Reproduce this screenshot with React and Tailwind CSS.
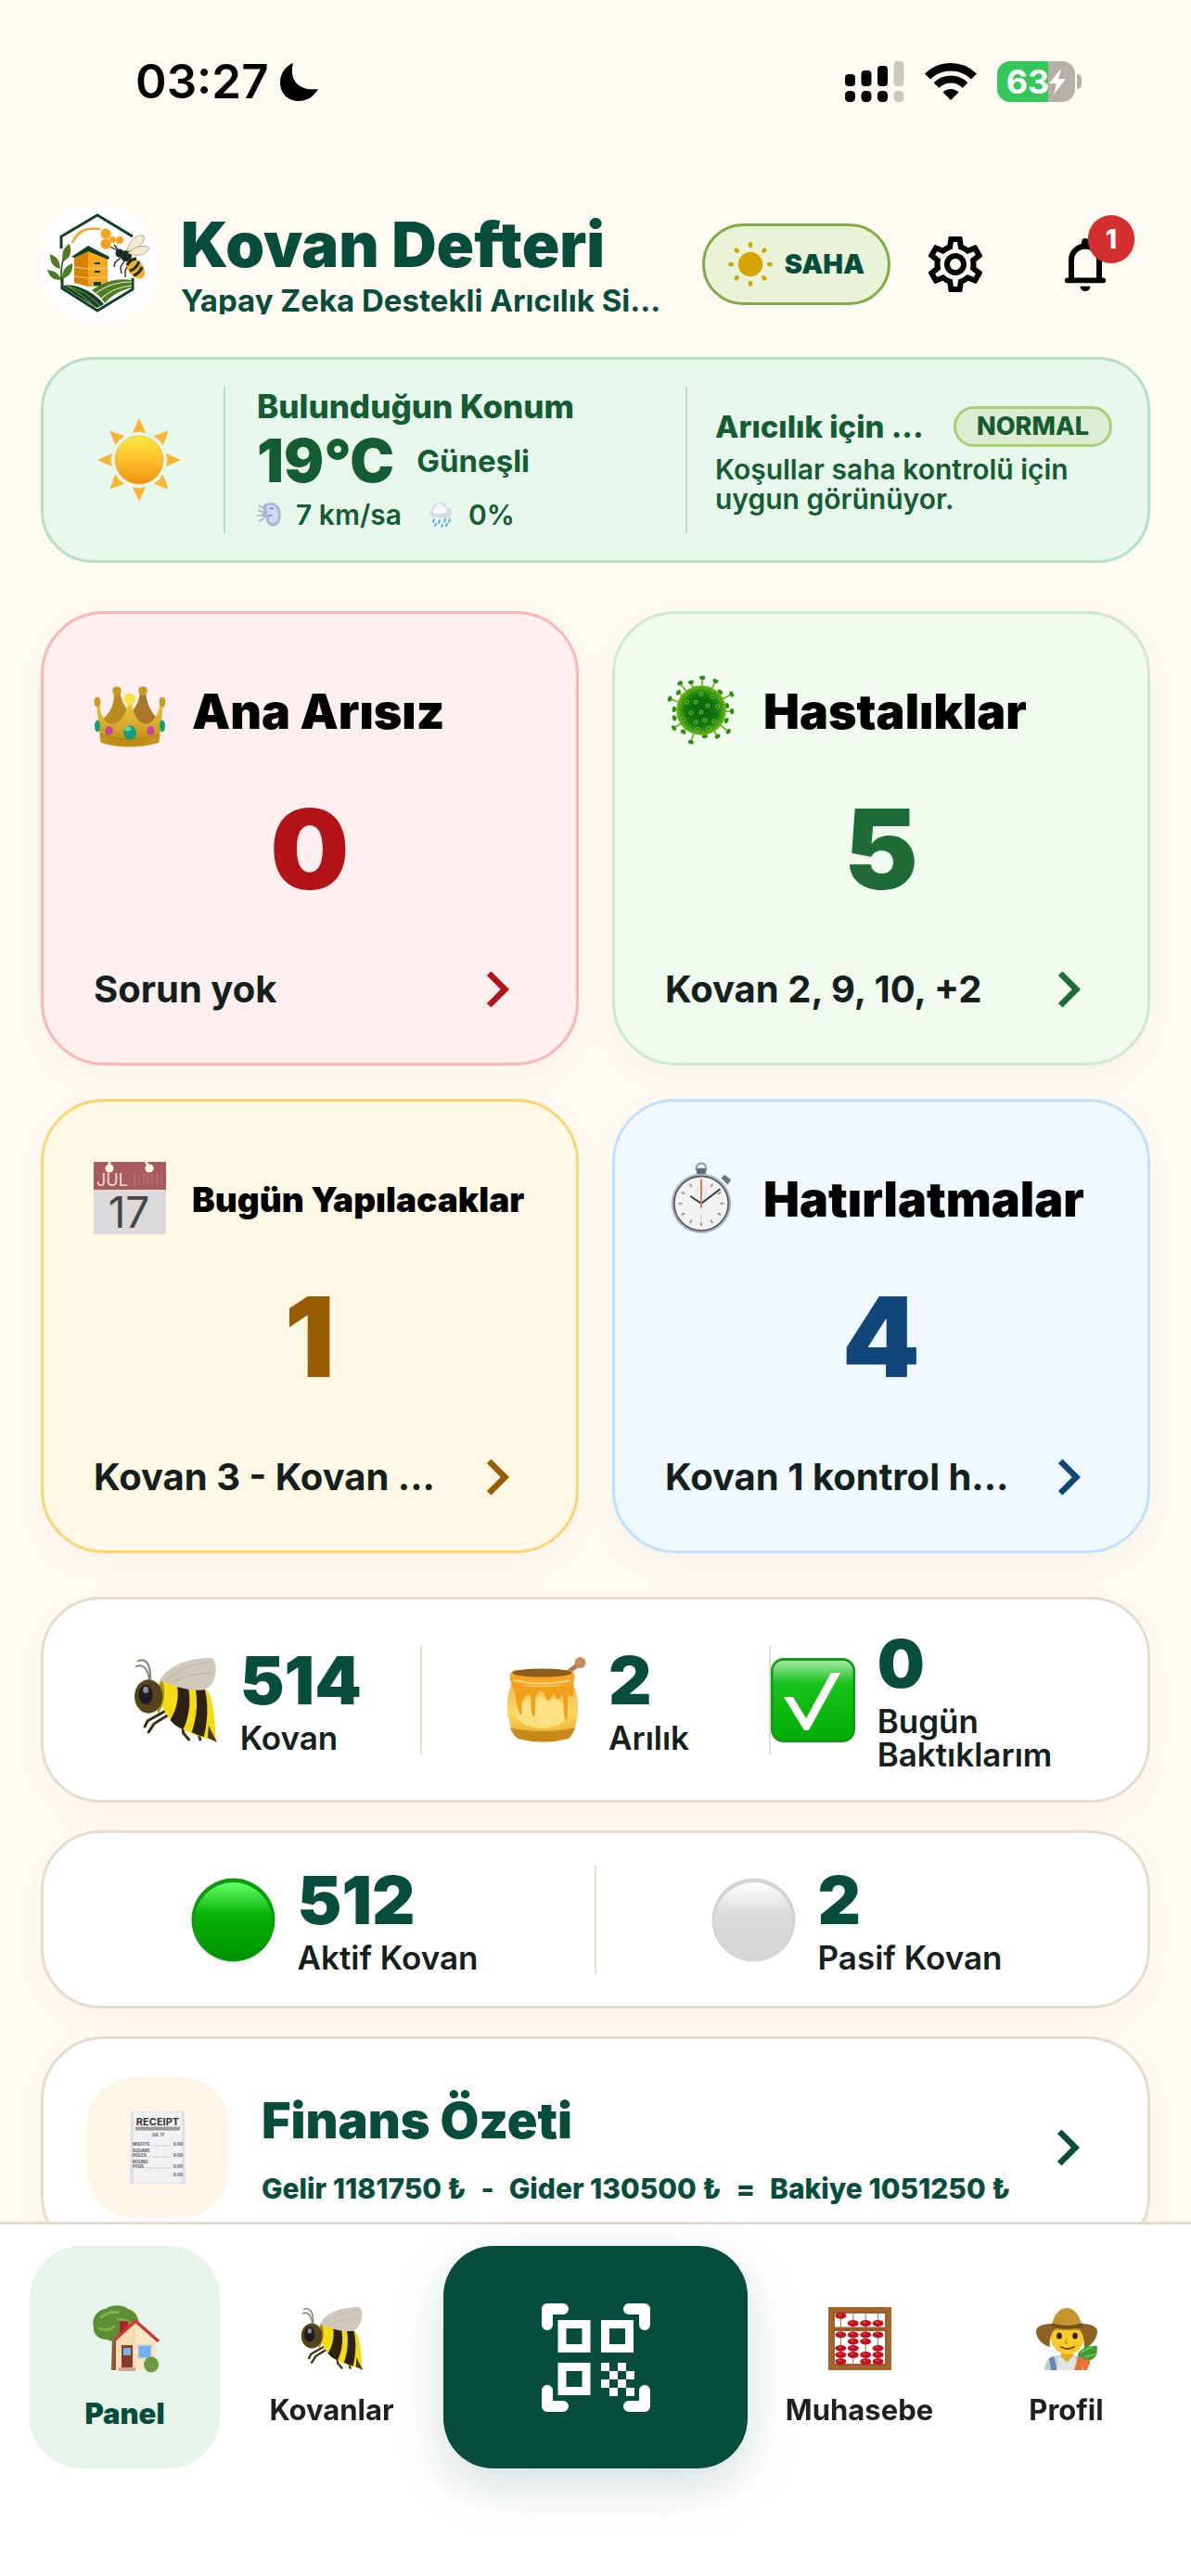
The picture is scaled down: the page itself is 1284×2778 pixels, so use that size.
import React from 'react'
import { MdChevronRight, MdOutlineSettings } from 'react-icons/md'

function Logo() {
  return (
    <svg viewBox="0 0 124 124" className="h-[124px] w-[124px] shrink-0" role="img" aria-label="Kovan Defteri">
      <rect width="124" height="124" rx="54" fill="#fefefe" />
      <g fill="none" stroke="#12402a" strokeWidth="3">
        <path d="M22 45V32L61 9l38 23" />
        <path d="M23 76v12l38 24 38-23V77" />
      </g>
      <path d="M34 39C40 25 50 22 64 24" fill="none" stroke="#f5a21d" strokeWidth="2.6" />
      <g fill="#f5a21d">
        <circle cx="70" cy="29" r="5.6" />
        <circle cx="70" cy="40" r="5.6" />
        <circle cx="77.500" cy="35.500" r="3.400" />
        <circle cx="85" cy="36" r="4" />
      </g>
      <path d="M36 54L51 47v39l-15-4z" fill="#d98208" />
      <path d="M51 47l21 9v30H51z" fill="#f7a81f" />
      <path d="M36 65l15 2 21-1M36 75l15 2 21-1" fill="none" stroke="#fbd07a" strokeWidth="1.2" />
      <path d="M51 42l23 12-1 3-22-9-15 7-3-1z" fill="#12402a" />
      <path d="M58 60h6v2h-6zM58 69h6v2h-6zM57 81h8v4h-8z" fill="#12402a" />
      <path d="M23 86c6-3 16-1 24 3 9 4 16 10 21 16l-7 4-19-11z" fill="#12402a" />
      <path d="M27 85c15 4 25 10 37 22M27 85c12 7 21 12 31 23" stroke="#5d8a2a" strokeWidth="1.4" fill="none" />
      <path d="M55 90c12-9 28-14 43-11v8c-12 3-21 8-29 17-4-6-8-10-14-14z" fill="#4f7d23" />
      <path d="M60 93c11-9 24-12 38-12M65 99c10-9 20-13 33-14" stroke="#dfe9cf" strokeWidth="1.2" fill="none" />
      <path d="M23 83C20 70 24 52 30 42" fill="none" stroke="#12402a" strokeWidth="1.500" />
      <path d="M31 40c3 10 0 16-7 19-2-9 0-15 7-19zM10 51c8 3 11 8 11 16-8-2-11-7-11-16zM34 61c1 9-3 14-11 17 0-9 3-14 11-17zM7 68c8 1 13 4 15 11-8 0-13-3-15-11z" fill="#4f7d23" />
      <g fill="none" stroke="#1b2c26" strokeWidth="1.4">
        <path d="M82 47l-7-4M83 46l-4-5M86 55l-6 5-1 5M91 57l-5 8 1 7M95 60l-4 9 0 7" />
      </g>
      <ellipse cx="102" cy="66" rx="8" ry="13" transform="rotate(-38 102 66)" fill="#f5b01d" />
      <path d="M93 63c3-5 6-7 10-7M96 69c4-1 8-5 10-10M100 74c4-1 8-5 9-9" fill="none" stroke="#1b2c26" strokeWidth="3.2" />
      <circle cx="85" cy="50" r="4.500" fill="#1b2c26" />
      <circle cx="92" cy="53" r="6" fill="#1b2c26" />
      <g fill="#f3ead2" stroke="#a99d80" strokeWidth=".8">
        <path d="M93 48c2-12 10-18 18-17 2 8-6 15-18 17z" />
        <path d="M94 50c8-8 17-9 23-6-2 7-11 11-23 6z" />
      </g>
    </svg>
  )
}

function Signal() {
  return (
    <svg viewBox="0 0 64 44" className="h-11 w-16" role="img" aria-label="Sinyal">
      <g fill="#000">
        <rect x="0" y="14" width="11" height="13" rx="4" />
        <rect x="17.500" y="10" width="11" height="17" rx="4" />
        <rect x="35" y="5" width="11" height="22" rx="4" />
        <rect x="0" y="32" width="11" height="12" rx="4.500" />
        <rect x="17.500" y="32" width="11" height="12" rx="4.500" />
        <rect x="35" y="32" width="11" height="12" rx="4.500" />
      </g>
      <g fill="#cdc8c0">
        <rect x="52.500" y="0" width="11" height="27" rx="4" />
        <rect x="52.500" y="32" width="11" height="12" rx="4.500" />
      </g>
    </svg>
  )
}

function Wifi() {
  return (
    <svg viewBox="0 0 56 42" className="h-[42px] w-14" role="img" aria-label="Wi-Fi">
      <g fill="none" stroke="#000">
        <path d="M3 15.500A35.500 35.500 0 0 1 53 15.500" strokeWidth="8.500" />
        <path d="M12.500 25A22 22 0 0 1 43.500 25" strokeWidth="8" />
      </g>
      <path d="M28 41l-8.500-8.500a12 12 0 0 1 17 0z" />
    </svg>
  )
}

function Bell() {
  return (
    <svg viewBox="0 0 24 24" className="h-[72px] w-[72px]" aria-hidden="true">
      <path d="M7 17.800V10.500a5 5 0 0 1 10 0v7.300" fill="none" stroke="#000" strokeWidth="2" />
      <path d="M5.600 17.800H18.400" stroke="#000" strokeWidth="1.900" strokeLinecap="round" />
      <path d="M12 5.200V4" stroke="#000" strokeWidth="2.600" strokeLinecap="round" />
      <path d="M10.200 19.900h3.600a1.800 1.800 0 0 1-3.600 0z" />
    </svg>
  )
}

const eight = [0, 45, 90, 135, 180, 225, 270, 315]

function FieldSun() {
  return (
    <svg viewBox="0 0 48 48" className="h-12 w-12 shrink-0" aria-hidden="true">
      <circle cx="24" cy="24" r="13.200" fill="#d6a400" />
      {eight.map(a => (
        <path key={a} d="M24 2.300v1.600" stroke="#d6a400" strokeWidth="4.400" strokeLinecap="round" transform={`rotate(${a} 24 24)`} />
      ))}
    </svg>
  )
}

function Sun() {
  return (
    <svg viewBox="0 0 90 90" className="h-[90px] w-[90px]" role="img" aria-label="Güneşli">
      <defs>
        <linearGradient id="sun" x1="0" y1="0" x2="0" y2="1">
          <stop offset="0" stopColor="#fde93c" />
          <stop offset=".5" stopColor="#fcc02b" />
          <stop offset="1" stopColor="#ef920f" />
        </linearGradient>
      </defs>
      <circle cx="45" cy="45" r="26" fill="url(#sun)" stroke="#eaa62c" strokeWidth=".6" />
      {eight.map(a => (
        <path key={a} d="M45 1l6.500 14.500q-6.500-2.500-13 0z" fill="#fbb52a" stroke="#f0a63a" strokeWidth=".6" transform={`rotate(${a} 45 45)`} />
      ))}
    </svg>
  )
}

function Wind() {
  return (
    <svg viewBox="0 0 28 28" className="h-7 w-7" aria-hidden="true">
      <path d="M7 4c4-4 12-4 16 1 4 6 4 14 0 19-4 4-10 3-12-1-1-3 0-5-3-6-3 0-4-3-2-5 2-3 0-5 1-8z" fill="#a9b8da" />
      <path d="M11 5c4-3 9-1 11 3 2 5 1 11-2 14-2 2-6 1-7-2 0-4-2-5-2-8 0-3-2-4 0-7z" fill="#cfdaef" />
      <path d="M1 9l5 2M0 15h5M2 21l6-3M2 4l5 3" stroke="#a9b3c8" strokeWidth="1.600" fill="none" />
      <path d="M14 8q2-2 4 0M12 15q3 1 4-1" stroke="#7787b2" strokeWidth="1.400" fill="none" />
    </svg>
  )
}

function RainCloud() {
  return (
    <svg viewBox="0 0 28 28" className="h-7 w-7" aria-hidden="true">
      <path d="M5 17a5 5 0 0 1 0-9 6 6 0 0 1 6-6c4-3 9 0 9 4 3 0 6 2 6 6s-3 6-5 6z" fill="#d9dbe6" />
      <path d="M7 13a4 4 0 0 1 1-6 5 5 0 0 1 9-2c3 1 4 4 3 7z" fill="#f7f7fb" />
      <path d="M7 19l-1 3M13 20l-1 3M19 19l-1 3M24 19l-1 3M9 24l-1 2M16 25l-1 2M21 24l-1 2" stroke="#4aa9e0" strokeWidth="1.800" strokeLinecap="round" />
    </svg>
  )
}

function Crown() {
  return (
    <svg viewBox="0 0 78 80" className="h-20 w-[78px] shrink-0" aria-hidden="true">
      <defs>
        <linearGradient id="gold" x1="0" y1="0" x2="0" y2="1">
          <stop offset="0" stopColor="#f0cf3c" />
          <stop offset=".6" stopColor="#d5a92c" />
          <stop offset="1" stopColor="#b8860f" />
        </linearGradient>
      </defs>
      <path d="M9 50C19 42 22 34 22 20h6c3 14 8 20 16 28L34 60H16z" fill="#b98a1c" />
      <path d="M34 48C44 40 49 32 50 20h6c1 12 5 22 14 30l-8 10H44z" fill="#a9762a" />
      <path d="M3 32l4 39q31 15 64 0l4-39h-3q-4 20-15 23-13 0-18-30-5 30-21 30Q8 52 6 32z" fill="url(#gold)" />
      <path d="M8 66q31 11 62 0" fill="none" stroke="#b38312" strokeWidth="1.500" />
      <path d="M7 71q32 13 64 0l-1 4q-31 9-62 0z" fill="#c1911b" />
      <g fill="#c99a1f">
        <ellipse cx="4" cy="31" rx="3.400" ry="5.500" />
        <circle cx="25" cy="19" r="4.800" />
        <circle cx="53" cy="19" r="4.800" />
        <ellipse cx="74" cy="31" rx="3.400" ry="5.500" />
      </g>
      <circle cx="39" cy="28" r="6.500" fill="#fbe048" />
      <ellipse cx="39" cy="64" rx="7" ry="7.500" fill="#12a07a" />
      <ellipse cx="37" cy="60" rx="3.500" ry="2.500" fill="#6fd0b2" />
      <ellipse cx="16.500" cy="62" rx="4" ry="5" fill="#c9429f" />
      <ellipse cx="61.500" cy="62" rx="4" ry="5" fill="#c9429f" />
      <ellipse cx="4" cy="57" rx="3" ry="6.500" fill="#12a07a" />
      <ellipse cx="74" cy="57" rx="3" ry="6.500" fill="#12a07a" />
    </svg>
  )
}

const spikes = [
  [2, 38], [26, 38], [46, 31], [62, 40], [80, 31], [92, 36], [112, 32], [128, 40], [148, 36], [172, 31],
  [198, 39], [220, 33], [237, 38], [254, 33], [272, 32], [290, 39], [308, 34], [322, 40], [340, 35],
]
const spots = [[40, 22], [52, 25], [24, 31], [34, 31], [47, 35], [58, 36], [29, 43], [40, 42], [20, 50], [34, 53], [44, 51], [54, 52], [36, 61], [48, 60]]

function Microbe() {
  return (
    <svg viewBox="0 0 80 80" className="h-20 w-[78px] shrink-0" aria-hidden="true">
      <defs>
        <radialGradient id="microbe">
          <stop offset="0" stopColor="#06600a" />
          <stop offset=".65" stopColor="#137c0c" />
          <stop offset="1" stopColor="#6ab918" />
        </radialGradient>
      </defs>
      {spikes.map(([a, r]) => (
        <g key={a} transform={`rotate(${a} 40 40)`}>
          <path d={`M40 40V${42 - r}`} stroke="#74bb2c" strokeWidth="2" />
          <ellipse cx="40" cy={42 - r} rx="3.200" ry="2.200" fill="#2c8f12" />
        </g>
      ))}
      <circle cx="40" cy="40" r="27.500" fill="url(#microbe)" />
      {spots.map(([x, y]) => (
        <circle key={`${x}-${y}`} cx={x} cy={y} r="2" fill="#1a7a10" stroke="#86bb45" strokeWidth="1" />
      ))}
    </svg>
  )
}

function Calendar() {
  return (
    <svg viewBox="0 0 78 80" className="h-20 w-[78px] shrink-0 overflow-visible font-['Inter',sans-serif]" aria-hidden="true">
      <rect y="1" width="78" height="30" fill="#a95b5c" />
      <rect y="31" width="78" height="48" fill="#dadada" />
      <path d="M17 0v6M56 0l3 6" stroke="#fff8e5" strokeWidth="2.600" />
      <circle cx="17" cy="8" r="4.600" fill="#fff8e5" />
      <circle cx="60" cy="8" r="4.600" fill="#fff8e5" />
      <path d="M44 15v12M49 15v12M54 14v12M58 14v12M63 14v12M68 14v11M73 14v11" stroke="#c08382" strokeWidth="1.200" strokeDasharray="2 1" />
      <text x="3" y="27" fontSize="18" fontWeight="400" fill="#f0dede">JUL</text>
      <text x="38" y="72" fontSize="46" fontWeight="400" fill="#454545" textAnchor="middle">17</text>
    </svg>
  )
}

function Stopwatch() {
  return (
    <svg viewBox="0 0 80 80" className="h-20 w-[78px] shrink-0" aria-hidden="true">
      <circle cx="40" cy="7" r="5.500" fill="#e6ecf2" stroke="#8c98a6" strokeWidth="2" />
      <rect x="35" y="7" width="10" height="7" fill="#5f6b78" />
      <path d="M62 18l4-4 7 6-4 5z" fill="#66788c" />
      <circle cx="40" cy="46" r="33" fill="#a6b6c8" />
      <circle cx="40" cy="46" r="30" fill="none" stroke="#5a4f57" strokeWidth="1.600" />
      <circle cx="40" cy="46" r="29" fill="#f2f2f2" />
      {[0, 30, 60, 90, 120, 150, 180, 210, 240, 270, 300, 330].map(a => (
        <path key={a} d="M40 21v4" stroke="#9a9a9a" strokeWidth="2" transform={`rotate(${a} 40 46)`} />
      ))}
      <circle cx="40" cy="34" r="6" fill="none" stroke="#c5c5c5" strokeWidth="1" strokeDasharray="2 2" />
      <path d="M40 58v8" stroke="#d0d0d0" strokeWidth="1.400" />
      <path d="M28 38l12 8 21-16" fill="none" stroke="#2f3b40" strokeWidth="2" />
      <path d="M40 19v32" stroke="#ee6a45" strokeWidth="1.800" />
    </svg>
  )
}

function Bee({ className }) {
  return (
    <svg viewBox="0 0 90 90" className={className} aria-hidden="true">
      <g fill="none" stroke="#3b2f16" strokeWidth="3" strokeLinecap="round">
        <path d="M5 3c8-3 13 3 13 19" stroke="#8b8272" strokeWidth="2" />
        <path d="M3 9c8-3 12 3 14 14" stroke="#8b8272" strokeWidth="2" />
        <path d="M33 57L15 67l-3 6M38 60L22 70l-6 9M52 68l1 12 6 7M68 76l3 11" />
      </g>
      <path d="M28 26C40 18 66 24 78 34c8 10 8 30 10 54C76 86 56 80 44 70 34 62 26 48 28 26z" fill="#f5dc12" />
      <path d="M45 24c5 14 1 32-6 42 4 5 8 8 14 10 7-14 9-34 4-50zM65 29c4 14 3 34-3 50 4 2 8 4 13 5 4-16 5-36 1-50z" fill="#2c2211" />
      <path d="M30 22c5 12 3 28-4 38-2-12-2-28 4-38z" fill="#a8940e" />
      <path d="M28 24C36 8 58 0 84 0c8 8 3 32-10 34C58 36 44 30 28 24z" fill="#cfc8bb" />
      <path d="M34 24C46 14 62 6 82 4M40 26c12-6 26-10 42-10" stroke="#bdb4a5" strokeWidth="1" fill="none" />
      <ellipse cx="16" cy="41" rx="15" ry="18" fill="#56441c" />
      <ellipse cx="13" cy="39" rx="7.500" ry="10.500" fill="#1c1c22" />
      <ellipse cx="13" cy="34" rx="3" ry="3.500" fill="#8d8d96" />
      <path d="M80 72l9 18-10-5z" fill="#4a3a17" />
    </svg>
  )
}

function Honey() {
  return (
    <svg viewBox="0 0 90 92" className="h-[92px] w-[91px] shrink-0" aria-hidden="true">
      <defs>
        <linearGradient id="honey" x1="0" y1="0" x2="0" y2="1">
          <stop offset="0" stopColor="#f0b860" />
          <stop offset=".5" stopColor="#fcd65c" />
          <stop offset="1" stopColor="#e9a425" />
        </linearGradient>
      </defs>
      <path d="M66 20L82 8" stroke="#b77a4e" strokeWidth="5" strokeLinecap="round" />
      <circle cx="84" cy="6" r="6" fill="#c98b62" />
      <path d="M11 28C2 42 4 76 17 88q27 7 54 0c13-14 14-46 4-60z" fill="url(#honey)" />
      <ellipse cx="43" cy="60" rx="28" ry="17" fill="#fee890" opacity=".75" />
      <path d="M8 76q35 8 71 0-3 9-8 12-27 7-54 0-6-4-9-12z" fill="#b7790f" opacity=".7" />
      <path d="M9 28q34 9 68 0v12c-2 4-5 3-5 0-3 3 0 26-3 28-4 0-2-26-5-28-3 10-6 4-9-1-4 11-7 10-10 1-3-5-6-3-8 2-3 4 0 22-3 22-4 0-2-22-5-24-3 0-5 2-7 6-3 8 1 16-3 16-4-8-4-24-10-34z" fill="#f2a01a" />
      <rect x="8" y="14" width="70" height="16" rx="7" fill="#f6a526" />
      <ellipse cx="43" cy="17" rx="32" ry="4.500" fill="#8d5d1b" />
      <path d="M12 25q31 7 62 0" stroke="#fdd47c" strokeWidth="2" fill="none" />
    </svg>
  )
}

function CheckBox() {
  return (
    <svg viewBox="0 0 91 91" className="h-[91px] w-[91px] shrink-0" aria-hidden="true">
      <defs>
        <linearGradient id="check" x1="0" y1="0" x2="0" y2="1">
          <stop offset="0" stopColor="#a6e6a4" />
          <stop offset=".28" stopColor="#19c41d" />
          <stop offset="1" stopColor="#00ad04" />
        </linearGradient>
      </defs>
      <rect width="91" height="91" rx="14" fill="#0d9c14" />
      <rect x="2.500" y="3" width="86" height="85" rx="11" fill="url(#check)" />
      <path d="M14 42h10l14 23 27-49h10L41 78h-5z" fill="#fff" />
    </svg>
  )
}

function Dot({ id, rim, top, mid, bottom }) {
  return (
    <svg viewBox="0 0 91 91" className="h-[91px] w-[91px] shrink-0" aria-hidden="true">
      <defs>
        <linearGradient id={id} x1="0" y1="0" x2="0" y2="1">
          <stop offset="0" stopColor={top} />
          <stop offset=".42" stopColor={mid} />
          <stop offset="1" stopColor={bottom} />
        </linearGradient>
      </defs>
      <circle cx="45.500" cy="45.500" r="45" fill={rim} />
      <ellipse cx="45.500" cy="47" rx="42" ry="42" fill={`url(#${id})`} />
    </svg>
  )
}

function Receipt() {
  return (
    <svg viewBox="0 0 60 78" className="h-[78px] w-[60px] font-['Inter',sans-serif]" aria-hidden="true">
      <path d="M1 0h58l1 78H0z" fill="#e0e0e5" />
      <path d="M4 1h52v76H4z" fill="#f2f2f5" />
      <text x="30" y="15" fontSize="11" fontWeight="700" fill="#333" textAnchor="middle">RECEIPT</text>
      <path d="M6 18.500h48" stroke="#9a9a9a" strokeWidth="4" />
      <g fontSize="4.500" fontWeight="700" fill="#555">
        <text x="30" y="27" textAnchor="middle">JUL 17</text>
        <text x="3" y="37">MISFITS</text>
        <text x="3" y="44">SQUARE</text>
        <text x="3" y="49">HOLES</text>
        <text x="3" y="56">ROUND</text>
        <text x="3" y="61">PEGS</text>
        <text x="57" y="37" textAnchor="end">0.00</text>
        <text x="57" y="49" textAnchor="end">0.00</text>
        <text x="57" y="61" textAnchor="end">0.00</text>
        <text x="57" y="70" textAnchor="end">0.00</text>
      </g>
      <path d="M24 37h20M20 49h24M18 61h26" stroke="#999" strokeWidth=".8" strokeDasharray="1 1" />
    </svg>
  )
}

function House() {
  return (
    <svg viewBox="0 0 75 75" className="h-[75px] w-[75px]" aria-hidden="true">
      <path d="M24 34h7v37h-8z" fill="#8a5a36" />
      <path d="M4 24C1 14 10 5 17 5c6-5 18-5 24 0 8 2 13 10 11 19-1 9-9 15-16 14-7 4-14 2-18 0C9 38 3 32 4 24z" fill="#5c8f33" />
      <path d="M12 14q8-7 18-5M10 26q9 4 16-2M30 16q8 0 14 5" stroke="#7fb04a" strokeWidth="3" fill="none" strokeLinecap="round" />
      <path d="M32 18h9v15h-9z" fill="#a2282c" />
      <path d="M28 37l21-18 22 20v32H28z" fill="#fbe7c6" />
      <path d="M28 37l21-18v52H28z" fill="#f6dcb4" />
      <path d="M26 39l23-21 25 22" fill="none" stroke="#d5363c" strokeWidth="3.400" />
      <path d="M34 44h12v25H34z" fill="#8b3a2a" />
      <path d="M36 47h8v8h-8z" fill="#79b4ea" />
      <path d="M52 44h14v14H52z" fill="#72b0ec" stroke="#c9d2da" strokeWidth="1.500" />
      <path d="M31 68h18v4H31z" fill="#c9a79a" />
      <ellipse cx="66" cy="65" rx="8" ry="8.500" fill="#6b9b3c" />
    </svg>
  )
}

const beads = [
  [13, 9], [26, 17], [39, 17], [52, 17],
  [13, 29], [13, 43], [13, 50], [13, 57],
  [26, 29], [26, 36], [26, 43], [26, 50],
  [39, 29], [39, 36], [39, 50], [39, 57],
  [52, 29], [52, 43], [52, 50], [52, 57],
]

function Abacus() {
  return (
    <svg viewBox="0 0 66 66" className="h-[68px] w-[68px]" aria-hidden="true">
      <rect x="3" y="3" width="60" height="60" fill="#fff" stroke="#a5642a" strokeWidth="6" />
      <rect x="6" y="6" width="54" height="54" fill="none" stroke="#6d3d14" strokeWidth="1" />
      <path d="M13 6v54M26 6v54M39 6v54M52 6v54" stroke="#b08070" strokeWidth="1.200" />
      <path d="M5 23h56" stroke="#9a5c26" strokeWidth="4.500" />
      {beads.map(([x, y]) => (
        <g key={`${x}-${y}`}>
          <ellipse cx={x} cy={y} rx="5.800" ry="3.300" fill="#c40f1c" />
          <ellipse cx={x - 1} cy={y - 1} rx="2" ry=".7" fill="#e8505a" />
        </g>
      ))}
    </svg>
  )
}

function Farmer() {
  return (
    <svg viewBox="0 0 68 68" className="h-[68px] w-[68px]" aria-hidden="true">
      <path d="M10 68c0-11 6-15 15-16h17c9 1 15 6 16 16z" fill="#b9d3cb" />
      <path d="M20 53l4 15h-7l-2-13zM46 53l-2 15h6l2-12z" fill="#6f80b3" />
      <path d="M25 52l9 8 9-8 2 16H23z" fill="#dfe5e2" />
      <path d="M28 44h13v9l-7 6-6-6z" fill="#e8a91c" />
      <path d="M16 24h37c1 18-7 27-18 27S15 42 16 24z" fill="#fbc92a" />
      <path d="M18 20C20 6 28 1 34 1s14 5 16 19l2 5H16z" fill="#c6942f" />
      <path d="M1 26c0-4 5-8 16-8 10 5 26 5 35 0 9 0 15 4 15 8 0 9-8 17-14 18 0-10-2-18-7-21-7-2-17-2-24 0-5 4-7 12-6 20C8 41 1 34 1 26z" fill="#8d6325" />
      <path d="M18 17q16 6 33 0l1 4q-17 6-35 0z" fill="#73501c" />
      <ellipse cx="26" cy="31" rx="2.800" ry="3.600" fill="#33230f" />
      <ellipse cx="43" cy="31" rx="2.800" ry="3.600" fill="#33230f" />
      <path d="M34 34q-3 6 1 5" fill="none" stroke="#d48f12" strokeWidth="1.500" />
      <path d="M28 43q7 4 14 0" fill="none" stroke="#6e3d12" strokeWidth="2" strokeLinecap="round" />
      <path d="M46 52c1-7 7-5 8-11 5 3 9 0 13 1-1 6 1 10-5 14-6 4-12 3-16-4z" fill="#3f9b33" />
      <path d="M49 49l13-7M53 54l12-3" stroke="#77c552" strokeWidth="1.500" />
      <path d="M46 55c4-2 8 0 8 4l-5 9h-7zM54 57c3-1 6 1 5 4l-4 7h-4z" fill="#f0702a" />
    </svg>
  )
}

function QrScan() {
  return (
    <svg viewBox="0 0 117 117" className="h-[117px] w-[117px]" aria-hidden="true">
      <g fill="none" stroke="#fff" strokeWidth="12" strokeLinecap="round" strokeLinejoin="round">
        <path d="M6 23V6h17M94 6h17v17M111 94v17H94M23 111H6V94" />
      </g>
      <g fill="none" stroke="#fff" strokeWidth="9">
        <path d="M22 22.500h26v26H22zM68.500 22.500h26v26h-26zM22 68.500h26v26H22z" />
      </g>
      <path d="M64 64h9v9h-9zM82 64h9v9h-9zM73 73h9v9h-9zM91 73h9v9h-9zM64 82h9v9h-9zM82 82h9v9h-9zM73 91h9v9h-9zM91 91h9v9h-9z" fill="#fff" />
    </svg>
  )
}

const cards = [
  { title: 'Ana Arısız', titleSize: 'text-[52px]', count: 0, note: 'Sorun yok', icon: Crown, box: 'border-[#ffb4b5] bg-[#fff0ef]', color: 'text-[#b31217]' },
  { title: 'Hastalıklar', titleSize: 'text-[52px]', count: 5, note: 'Kovan 2, 9, 10, +2', icon: Microbe, box: 'border-[#cdebcc] bg-[#f0faee]', color: 'text-[#1f6b36]' },
  { title: 'Bugün Yapılacaklar', titleSize: 'text-[37px]', count: 1, note: 'Kovan 3 - Kovan ...', icon: Calendar, box: 'border-[#ffd370] bg-[#fff8e4]', color: 'text-[#995b00]' },
  { title: 'Hatırlatmalar', titleSize: 'text-[52px]', count: 4, note: 'Kovan 1 kontrol h...', icon: Stopwatch, box: 'border-[#c3dfff] bg-[#eff8ff]', color: 'text-[#10467b]' },
]

function Card({ title, titleSize, count, note, icon: Icon, box, color }) {
  return (
    <button type="button" className={`flex flex-col rounded-[68px] border-3 px-[54px] pt-[64px] pb-[40px] text-left shadow-[0_12px_40px_rgba(60,40,10,0.04)] ${box}`}>
      <span className="flex w-full items-center gap-7">
        <Icon />
        <span className={`whitespace-nowrap pt-1 font-black leading-[60px] text-black ${titleSize}`}>{title}</span>
      </span>
      <span className={`mt-[50px] w-full text-center text-[120px] font-black leading-[120px] ${color}`}>{count}</span>
      <span className="mt-[52px] flex w-full items-center justify-between">
        <span className="whitespace-nowrap text-[40px] font-bold leading-[44px] text-[#14201c]">{note}</span>
        <MdChevronRight className={`-mr-2 h-[78px] w-[78px] shrink-0 ${color}`} />
      </span>
    </button>
  )
}

function Stat({ icon, value, label }) {
  return (
    <div className="flex flex-1 basis-0 items-center justify-center gap-6">
      {icon}
      <div className="min-w-0">
        <div className="text-[72px] font-black leading-[76px] text-[#064e3b]">{value}</div>
        <div className="mt-[6px] text-[35px] font-semibold leading-[36px] text-[#14201c]">{label}</div>
      </div>
    </div>
  )
}

function Divider() {
  return <div className="h-[117px] w-[2px] shrink-0 self-center bg-[#e5dccb]" />
}

const navLeft = [
  { label: 'Panel', icon: <House />, active: true },
  { label: 'Kovanlar', icon: <Bee className="h-[68px] w-[68px]" /> },
]
const navRight = [
  { label: 'Muhasebe', icon: <Abacus /> },
  { label: 'Profil', icon: <Farmer /> },
]

function NavItem({ label, icon, active }) {
  return (
    <a
      href="#"
      aria-current={active ? 'page' : undefined}
      className={`flex flex-1 basis-0 flex-col items-center justify-center gap-[26px] rounded-[56px] pt-5 text-[31px] leading-[34px] ${active ? 'bg-[#e6f4ea] font-black text-[#064e3b]' : 'font-bold text-[#1f1f1f]'}`}
    >
      {icon}
      <span>{label}</span>
    </a>
  )
}

export default function App() {
  return (
    <div className="min-h-screen bg-[#fffaf2] pb-[300px] font-['Inter',sans-serif] text-[#14201c]">
      <div className="flex items-center justify-between pt-[58px] pr-[118px] pl-[146px]">
        <div className="flex items-center gap-3">
          <span className="text-[51px] font-semibold leading-[60px] text-black">03:27</span>
          <svg viewBox="0 0 42 42" className="h-[42px] w-[42px]" role="img" aria-label="Rahatsız etme">
            <path d="M14 1C10 15 16 32 41 29 36 38 28 42 20 42 8 42 0 33 0 22 0 12 6 4 14 1z" />
          </svg>
        </div>
        <div className="flex items-center gap-[22px]">
          <Signal />
          <Wifi />
          <div className="flex items-center gap-[2px]">
            <div className="flex h-11 w-[84px] items-center justify-center rounded-[14px] bg-[linear-gradient(90deg,#34c759_65%,#b5b0a9_65%)] text-white">
              <span className="text-[36px] font-bold leading-[44px]">63</span>
              <svg viewBox="0 0 18 28" className="h-7 w-[18px]" fill="currentColor" aria-hidden="true">
                <path d="M13 0L0 16h8L5 28l13-17h-8z" />
              </svg>
            </div>
            <div className="h-4 w-[5px] rounded-r-full bg-[#b5b0a9]" />
          </div>
        </div>
      </div>

      <header className="flex items-center px-11 pt-[105px]">
        <Logo />
        <div className="min-w-0 flex-1 pb-1 pl-[27px]">
          <h1 className="text-[67px] font-black leading-[74px] text-[#064e3b]">Kovan Defteri</h1>
          <p className="mt-2 overflow-hidden text-[33px] font-bold leading-[30px] whitespace-nowrap text-[#064e3b]">Yapay Zeka Destekli Arıcılık Si...</p>
        </div>
        <button type="button" className="flex h-[88px] items-center gap-[13px] rounded-full border-3 border-[#7fac43] bg-[#e9f3d8] px-[25px]">
          <FieldSun />
          <span className="text-[29px] font-black leading-[34px] text-[#064e3b]">SAHA</span>
        </button>
        <button type="button" aria-label="Ayarlar" className="flex w-[140px] justify-center">
          <MdOutlineSettings className="h-[72px] w-[72px] text-black" />
        </button>
        <button type="button" aria-label="Bildirimler" className="relative flex w-[140px] justify-center">
          <Bell />
          <span className="absolute -top-[17px] right-[17px] flex h-[52px] w-[50px] items-center justify-center rounded-full bg-[#d32f2f] text-[28px] font-extrabold text-white">1</span>
        </button>
      </header>

      <main className="px-11 pt-[38px]">
        <section className="grid grid-cols-[194px_1fr_1fr] rounded-[56px] border-3 border-[#b5dfc6] bg-[#e7f7eb] py-[29px] text-[#145c32]">
          <div className="flex items-center justify-center pl-3">
            <Sun />
          </div>
          <div className="min-w-0 border-l-2 border-[#b5dfc6] pl-[34px]">
            <h2 className="text-[35px] font-extrabold leading-[42px]">Bulunduğun Konum</h2>
            <div className="flex items-center gap-6">
              <span className="text-[64px] font-black leading-[76px]">19°C</span>
              <span className="text-[33px] font-bold leading-[36px]">Güneşli</span>
            </div>
            <div className="flex items-center text-[30px] font-semibold leading-[40px]">
              <Wind />
              <span className="pl-[14px]">7 km/sa</span>
              <span className="pl-7"><RainCloud /></span>
              <span className="pl-4">0%</span>
            </div>
          </div>
          <div className="flex min-w-0 flex-col justify-center border-l-2 border-[#b5dfc6] pr-[38px] pl-[30px]">
            <div className="flex items-center justify-between">
              <h2 className="whitespace-nowrap text-[33px] font-extrabold leading-[44px]">Arıcılık için ...</h2>
              <span className="rounded-full border-3 border-[#a9cf74] bg-[#dcedd2] px-[22px] text-[27px] font-extrabold leading-[38px]">NORMAL</span>
            </div>
            <p className="mt-2 text-[30px] font-semibold leading-[32px]">
              Koşullar saha kontrolü için<br />uygun görünüyor.
            </p>
          </div>
        </section>

        <section className="mt-[52px] grid grid-cols-2 gap-9">
          {cards.map(c => <Card key={c.title} {...c} />)}
        </section>

        <section className="mt-[47px] flex rounded-[64px] border-3 border-[#e5dccb] bg-white px-[33px] py-[31px] shadow-[0_12px_40px_rgba(60,40,10,0.03)]">
          <Stat icon={<Bee className="h-[91px] w-[91px] shrink-0" />} value="514" label="Kovan" />
          <Divider />
          <Stat icon={<Honey />} value="2" label="Arılık" />
          <Divider />
          <Stat icon={<CheckBox />} value="0" label="Bugün Baktıklarım" />
        </section>

        <section className="mt-[30px] flex rounded-[64px] border-3 border-[#e5dccb] bg-white px-[33px] py-[34px] shadow-[0_12px_40px_rgba(60,40,10,0.03)]">
          <Stat icon={<Dot id="active" rim="#0a9b10" top="#63ff63" mid="#06b306" bottom="#009200" />} value="512" label="Aktif Kovan" />
          <Divider />
          <Stat icon={<Dot id="passive" rim="#d3d3d3" top="#ffffff" mid="#d9d9d9" bottom="#d6d6d6" />} value="2" label="Pasif Kovan" />
        </section>

        <button type="button" className="mt-[30px] flex w-full items-center rounded-[68px] border-3 border-[#e5dccb] bg-white py-[41px] pr-[47px] pl-[47px] text-left text-[#064e3b] shadow-[0_12px_40px_rgba(60,40,10,0.04)]">
          <span className="flex h-[152px] w-[152px] shrink-0 items-center justify-center rounded-[50px] bg-[#fff5e7]">
            <Receipt />
          </span>
          <span className="flex min-w-0 flex-1 flex-col pl-9">
            <span className="text-[54px] font-black leading-[62px]">Finans Özeti</span>
            <span className="mt-[25px] flex gap-4 whitespace-nowrap text-[30px] font-extrabold leading-[34px]">
              <span>Gelir 1181750 ₺</span><span>-</span><span>Gider 130500 ₺</span><span>=</span><span>Bakiye 1051250 ₺</span>
            </span>
          </span>
          <MdChevronRight className="h-[78px] w-[78px] shrink-0" />
        </button>
      </main>

      <nav className="fixed inset-x-0 bottom-0 flex gap-[18px] border-t-3 border-[#e5dccb] bg-white px-8 pt-[23px] pb-[116px]">
        {navLeft.map(n => <NavItem key={n.label} {...n} />)}
        <button type="button" aria-label="QR kod tara" className="flex h-[240px] flex-[1.6] basis-0 items-center justify-center rounded-[54px] bg-[#064e3b] shadow-[0_18px_54px_rgba(6,78,59,0.18)]">
          <QrScan />
        </button>
        {navRight.map(n => <NavItem key={n.label} {...n} />)}
      </nav>
    </div>
  )
}
